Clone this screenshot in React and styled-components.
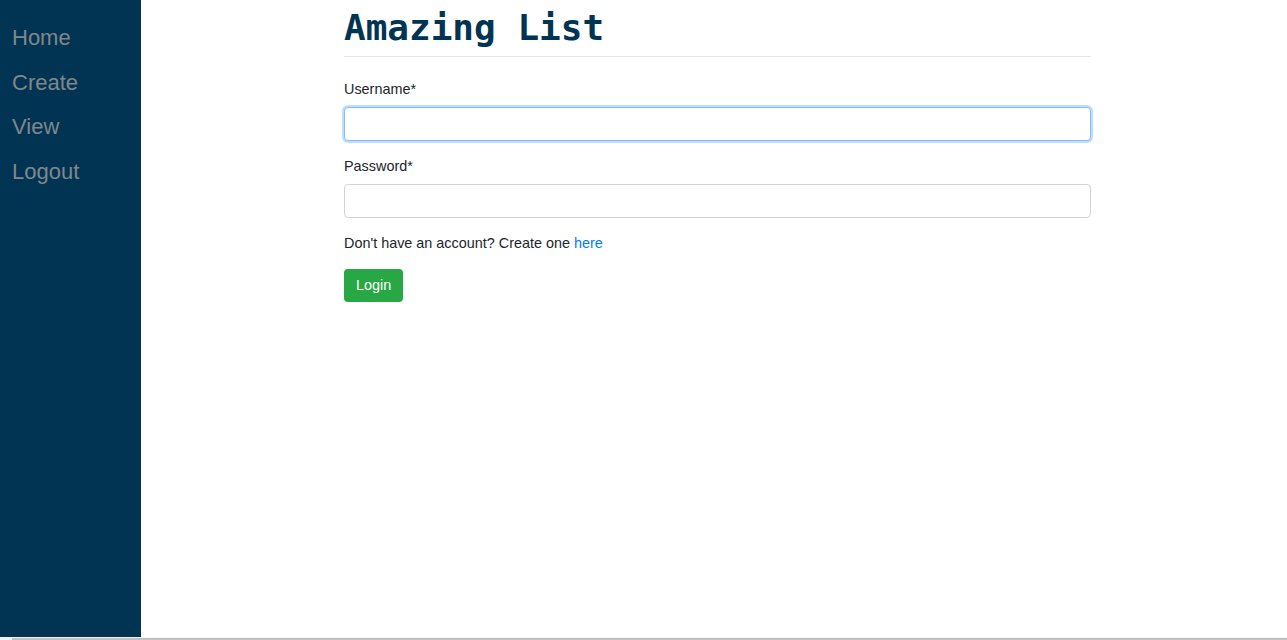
import React from 'react';
import styled, { createGlobalStyle } from 'styled-components';

const GlobalStyle = createGlobalStyle`
  html, body {
    margin: 0;
    padding: 0;
    background: #fff;
    font-family: "Liberation Sans", Arial, sans-serif;
    color: #212529;
  }
  * {
    box-sizing: border-box;
  }
`;

const Page = styled.div`
  display: flex;
  flex-direction: column;
  height: 640px;
  overflow: hidden;
`;

const Body = styled.div`
  display: flex;
  height: 637px;
`;

const Sidebar = styled.nav`
  width: 141px;
  flex-shrink: 0;
  background: #003452;
  padding-top: 16px;
`;

const NavLink = styled.a`
  display: block;
  padding: 8px 12px;
  font-size: 22px;
  line-height: 28.6px;
  color: #80878c;
  text-decoration: none;
  cursor: pointer;
`;

const Main = styled.main`
  flex: 1;
  padding-left: 203px;
`;

const Content = styled.div`
  width: 747px;
`;

const Title = styled.h1`
  margin: 0;
  padding: 6px 0 7px;
  font-family: "DejaVu Sans Mono", "Liberation Mono", monospace;
  font-weight: bold;
  font-size: 36px;
  line-height: 43px;
  color: #003452;
  border-bottom: 1px solid #e5e5e5;
`;

const Form = styled.form`
  margin-top: 22px;
`;

const Group = styled.div`
  margin-bottom: 15px;
`;

const Label = styled.label`
  display: block;
  font-size: 14.4px;
  line-height: 20px;
  margin-bottom: 8px;
`;

const Input = styled.input`
  display: block;
  width: 100%;
  height: 34px;
  padding: 6px 12px;
  font-size: 14.4px;
  line-height: 20px;
  font-family: inherit;
  border: 1px solid ${({ focused }) => (focused ? '#80bdff' : '#ced4da')};
  border-radius: 4px;
  outline: none;
  box-shadow: ${({ focused }) => (focused ? '0 0 0 2px rgba(0, 123, 255, 0.25)' : 'none')};
`;

const Hint = styled.p`
  margin: 15px 0 16px;
  font-size: 14.4px;
  line-height: 20px;
`;

const Link = styled.a`
  color: #007bff;
  text-decoration: none;
`;

const Button = styled.button`
  display: block;
  height: 33px;
  padding: 6px 12px;
  font-family: inherit;
  font-size: 14.4px;
  line-height: 21px;
  color: #fff;
  background: #28a745;
  border: none;
  border-radius: 4px;
  cursor: pointer;
`;

const Scrollbar = styled.div`
  height: 3px;
  background: #f1f1f1;
  padding-left: 12px;
  padding-top: 1px;
`;

const Thumb = styled.div`
  height: 2px;
  background: #c1c1c1;
`;

export default function App() {
  return (
    <Page>
      <GlobalStyle />
      <Body>
        <Sidebar>
          <NavLink>Home</NavLink>
          <NavLink>Create</NavLink>
          <NavLink>View</NavLink>
          <NavLink>Logout</NavLink>
        </Sidebar>
        <Main>
          <Content>
            <Title>Amazing List</Title>
            <Form onSubmit={(e) => e.preventDefault()}>
              <Group>
                <Label>Username*</Label>
                <Input type="text" focused />
              </Group>
              <Group>
                <Label>Password*</Label>
                <Input type="password" />
              </Group>
              <Hint>
                Don't have an account? Create one <Link>here</Link>
              </Hint>
              <Button type="submit">Login</Button>
            </Form>
          </Content>
        </Main>
      </Body>
      <Scrollbar>
        <Thumb />
      </Scrollbar>
    </Page>
  );
}
